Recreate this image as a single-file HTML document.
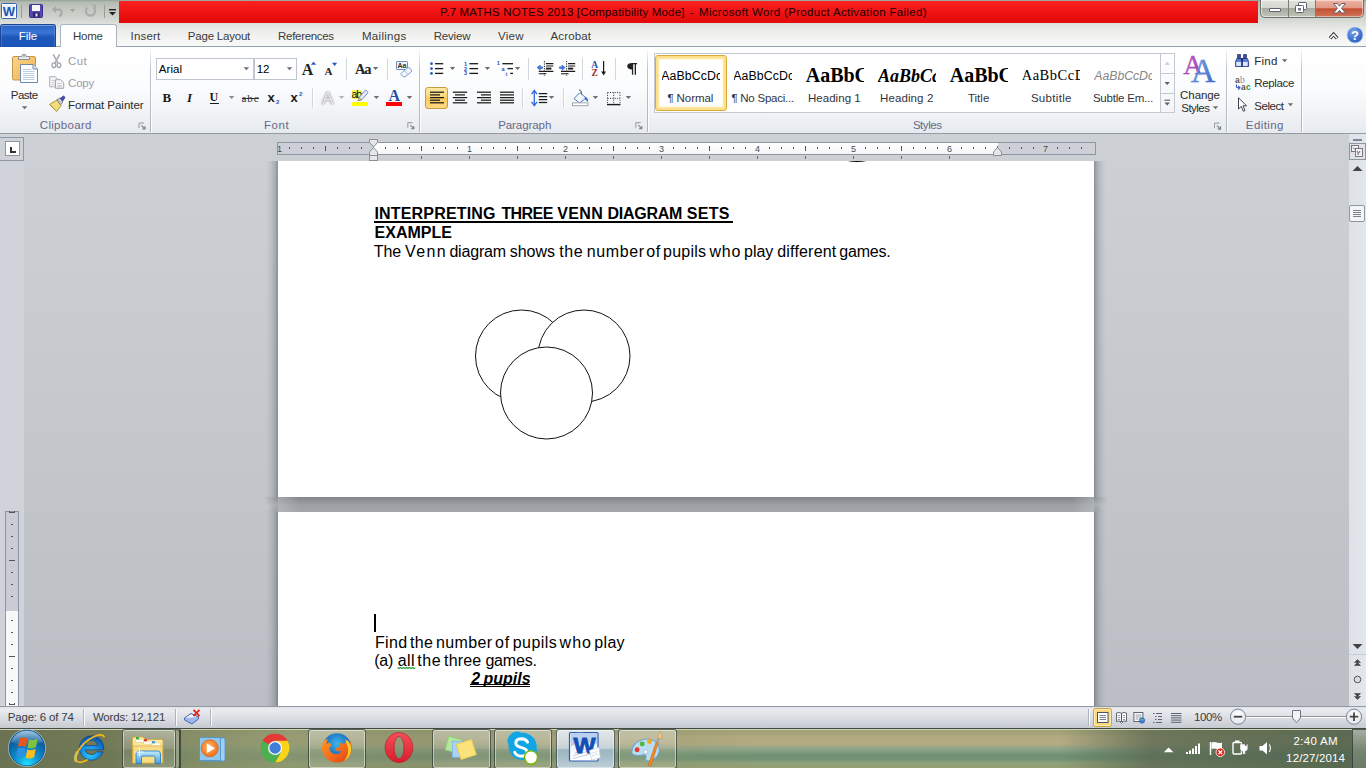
<!DOCTYPE html>
<html>
<head>
<meta charset="utf-8">
<title>P.7 MATHS NOTES 2013 - Microsoft Word</title>
<style>
*{box-sizing:border-box;margin:0;padding:0}
html,body{width:1366px;height:768px;overflow:hidden;background:#c9cdd2;font-family:"Liberation Sans",sans-serif;}
#root{position:absolute;left:0;top:0;width:1366px;height:768px;overflow:hidden;}
.abs{position:absolute}
.t{position:absolute;white-space:nowrap;font-size:12px;color:#3a3a3a;line-height:14px}
svg{position:absolute;overflow:visible}
/* title bar */
#title{left:0;top:0;width:1366px;height:47px;background:linear-gradient(180deg,#8fa097 0px,#b4bab2 2px,#c2c6bf 8px,#ccd0c9 16px,#dcdfda 23px,#ecedea 31px,#f5f6f4 40px,#f8f8f7 46px);}
#redbar{left:119px;top:1px;width:1139px;height:22px;background:linear-gradient(180deg,#fb2222 0,#f01414 10px,#e30a0a 21px);}
#tabline{left:0;top:46px;width:1366px;height:1px;background:#93a2b5}
#ribbon{left:0;top:47px;width:1366px;height:86px;background:linear-gradient(180deg,#ffffff 0,#fbfcfd 40px,#f0f2f5 68px,#e6e9ee 86px);}
#ribbot{left:0;top:133px;width:1366px;height:2px;background:linear-gradient(180deg,#8c929b,#b4b9c0)}
#docbg{left:0;top:134px;width:1366px;height:572px;background:linear-gradient(180deg,#cdd1d6 0,#c9cdd2 150px,#c2c6cb 350px,#bbbfc5 572px);}
.page{background:#fff}
.dt{font-size:16px;line-height:18px;color:#000;white-space:nowrap}
#status{left:0;top:706px;width:1366px;height:22px;background:linear-gradient(180deg,#dfe2e7 0,#e9ebef 3px,#d9dce2 12px,#c6cad1 21px);border-top:1px solid #9199a5}
#taskbar{left:0;top:728px;width:1366px;height:40px;background:linear-gradient(180deg,#3f4a42 0,#3f4a42 1px,#c6c6a4 1px,#c6c6a4 2px,#a2a275 2px,#a5a378 5px,#b2aa80 9px,#b3ab82 16px,#8fa58a 21px,#6f9274 27px,#729274 31px,#8fa078 35px,#959f72 40px);}
</style>
</head>
<body>
<div id="root">
<!--TITLE-->
<div id="title" class="abs"></div>
<div id="redbar" class="abs"></div>
<div class="t" style="left:439.90px;top:5px;font-size:11.5px;line-height:14px;color:#200000;letter-spacing:0.181px;">P.7 MATHS NOTES 2013 [Compatibility Mode]</div>
<div class="t" style="left:689.70px;top:5px;font-size:11.5px;line-height:14px;color:#200000;">-</div>
<div class="t" style="left:699.00px;top:5px;font-size:11.5px;line-height:14px;color:#200000;letter-spacing:0.316px;">Microsoft Word (Product Activation Failed)</div>
<!-- QAT -->
<svg style="left:0;top:0" width="120" height="24" viewBox="0 0 120 24">
<!-- word icon -->
<rect x="1.5" y="3.5" width="15" height="15" rx="1" fill="#fdfdfe" stroke="#3a62a8"/>
<rect x="3" y="5" width="12" height="12" fill="#e8eef8"/>
<text x="9" y="16" font-family="Liberation Sans" font-weight="bold" font-size="13" fill="#1d56b5" text-anchor="middle">W</text>
<rect x="21" y="5" width="1" height="13" fill="#9a9e9a"/>
<!-- save -->
<rect x="29.5" y="4.5" width="13" height="13" rx="1" fill="#5546b8" stroke="#3b2f8e"/>
<rect x="32" y="5" width="8" height="6" fill="#f4f6fb"/>
<rect x="33" y="12.5" width="6.5" height="4.5" fill="#2c2760"/>
<rect x="35.5" y="13.5" width="2" height="3" fill="#e8e8f0"/>
<!-- undo -->
<path d="M53.5 9.5 h5.5 a3 3 0 0 1 2.6 4.2 l-2.2 3" fill="none" stroke="#a4a8a6" stroke-width="2"/>
<path d="M52 9.5 l4 -3.5 v7 Z" fill="#a4a8a6"/>
<path d="M70 9 h5 l-2.5 3 Z" fill="#9a9e9c"/>
<!-- redo -->
<path d="M93.5 7.5 a4.6 4.6 0 1 1 -6 0" fill="none" stroke="#a9adab" stroke-width="2.2"/>
<path d="M91.5 4.5 h4.5 v4.5 Z" fill="#a9adab"/>
<rect x="104" y="5" width="1" height="13" fill="#9a9e9a"/>
<rect x="109" y="9" width="7" height="1.4" fill="#222"/>
<path d="M109 12 h7 l-3.5 3.5 Z" fill="#222"/>
</svg>
<!-- window controls -->
<div class="abs" style="left:1260px;top:0;width:104px;height:18px;border:1px solid #6f726c;border-top:none;border-radius:0 0 5px 5px;background:linear-gradient(180deg,#dfe1da 0,#d6d8d0 45%,#a7aa9e 50%,#c2c4b9 100%);box-shadow:inset 0 0 0 1px rgba(255,255,255,.55)"></div>
<div class="abs" style="left:1315px;top:0;width:48px;height:17px;border-radius:0 0 4px 0;background:linear-gradient(180deg,#edb3a4 0,#e29a88 45%,#c24f32 52%,#d1765a 100%);box-shadow:inset 0 0 0 1px rgba(255,255,255,.45)"></div>
<div class="abs" style="left:1288px;top:0;width:1px;height:17px;background:#7b7e77"></div>
<div class="abs" style="left:1315px;top:0;width:1px;height:17px;background:#7b7e77"></div>
<svg style="left:1260px;top:0" width="104" height="18" viewBox="1260 0 104 18">
<rect x="1269.5" y="8.5" width="11" height="3" rx=".5" fill="#fff" stroke="#5c6270"/>
<rect x="1298.5" y="2.5" width="8" height="7" rx=".8" fill="#fff" stroke="#5c6270"/>
<rect x="1295.5" y="5.5" width="8" height="7" rx=".8" fill="#fff" stroke="#5c6270"/>
<rect x="1298" y="8" width="3" height="2.5" fill="#767b88"/>
<path d="M1333.500 3.500 h3.800 l2.200 2.700 l2.200 -2.700 h3.800 l-4 4.700 l4 4.800 h-3.800 l-2.200 -2.700 l-2.200 2.700 h-3.800 l4 -4.800 Z" fill="#fff" stroke="#5c5668" stroke-width=".9"/>
</svg>
<!--TITLE-END-->
<!--TABS-->
<div id="tabline" class="abs"></div>
<div class="abs" style="left:0;top:24px;width:56px;height:23px;border-radius:3px 3px 0 0;border:1px solid #1b469a;border-bottom:none;background:linear-gradient(180deg,#2a63c4 0,#3a75d4 35%,#1c56b8 55%,#1a56b9 100%);box-shadow:inset 0 1px 0 rgba(255,255,255,.35),inset 1px 0 0 rgba(255,255,255,.15),inset -1px 0 0 rgba(255,255,255,.15)"></div>
<div class="abs" style="left:60px;top:24px;width:57px;height:24px;border-radius:3px 3px 0 0;border:1px solid #a9b4c3;border-bottom:none;background:#fff"></div>
<div class="t" style="left:18.70px;top:29px;font-size:11.5px;line-height:14px;color:#fff;letter-spacing:0.017px;">File</div>
<div class="t" style="left:73.00px;top:29px;font-size:11.5px;line-height:14px;color:#3a3a3a;letter-spacing:-0.267px;">Home</div>
<div class="t" style="left:130.50px;top:29px;font-size:11.5px;line-height:14px;color:#3a3a3a;letter-spacing:0.210px;">Insert</div>
<div class="t" style="left:187.80px;top:29px;font-size:11.5px;line-height:14px;color:#3a3a3a;letter-spacing:-0.210px;">Page Layout</div>
<div class="t" style="left:278.10px;top:29px;font-size:11.5px;line-height:14px;color:#3a3a3a;letter-spacing:-0.311px;">References</div>
<div class="t" style="left:362.00px;top:29px;font-size:11.5px;line-height:14px;color:#3a3a3a;letter-spacing:0.286px;">Mailings</div>
<div class="t" style="left:433.70px;top:29px;font-size:11.5px;line-height:14px;color:#3a3a3a;letter-spacing:-0.190px;">Review</div>
<div class="t" style="left:497.90px;top:29px;font-size:11.5px;line-height:14px;color:#3a3a3a;letter-spacing:0.283px;">View</div>
<div class="t" style="left:550.60px;top:29px;font-size:11.5px;line-height:14px;color:#3a3a3a;letter-spacing:0.108px;">Acrobat</div>
<svg style="left:1320px;top:24px" width="46" height="23" viewBox="1320 24 46 23">
<path d="M1330 38.300 l3.600 -4 l3.600 4" fill="none" stroke="#333" stroke-width="3.400" stroke-linejoin="miter"/>
<path d="M1330.200 38.200 l3.400 -3.800 l3.400 3.800" fill="none" stroke="#fff" stroke-width="1.500"/>
<defs><radialGradient id="hg" cx=".4" cy=".3" r=".8"><stop offset="0" stop-color="#7fa6e8"/><stop offset=".6" stop-color="#3f74d0"/><stop offset="1" stop-color="#2c5cb4"/></radialGradient></defs>
<circle cx="1355" cy="35" r="8" fill="url(#hg)" stroke="#b9cdf0" stroke-width=".8"/>
<text x="1355" y="40" font-family="Liberation Sans" font-weight="bold" font-size="13" fill="#fff" text-anchor="middle">?</text>
</svg>
<!--TABS-END-->
<!--RIBBON-->
<div id="ribbon" class="abs"></div>
<div id="ribbot" class="abs"></div>
<div class="abs" style="left:150px;top:50px;width:1px;height:82px;background:linear-gradient(180deg,rgba(176,184,196,.15),#bcc3ce 25%,#b3bac6 80%,#aeb5c1)"></div>
<div class="abs" style="left:151px;top:50px;width:1px;height:82px;background:rgba(255,255,255,.9)"></div>
<div class="abs" style="left:419px;top:50px;width:1px;height:82px;background:linear-gradient(180deg,rgba(176,184,196,.15),#bcc3ce 25%,#b3bac6 80%,#aeb5c1)"></div>
<div class="abs" style="left:420px;top:50px;width:1px;height:82px;background:rgba(255,255,255,.9)"></div>
<div class="abs" style="left:647px;top:50px;width:1px;height:82px;background:linear-gradient(180deg,rgba(176,184,196,.15),#bcc3ce 25%,#b3bac6 80%,#aeb5c1)"></div>
<div class="abs" style="left:648px;top:50px;width:1px;height:82px;background:rgba(255,255,255,.9)"></div>
<div class="abs" style="left:1226px;top:50px;width:1px;height:82px;background:linear-gradient(180deg,rgba(176,184,196,.15),#bcc3ce 25%,#b3bac6 80%,#aeb5c1)"></div>
<div class="abs" style="left:1227px;top:50px;width:1px;height:82px;background:rgba(255,255,255,.9)"></div>
<div class="abs" style="left:1301px;top:50px;width:1px;height:82px;background:linear-gradient(180deg,rgba(176,184,196,.15),#bcc3ce 25%,#b3bac6 80%,#aeb5c1)"></div>
<div class="abs" style="left:1302px;top:50px;width:1px;height:82px;background:rgba(255,255,255,.9)"></div>
<div class="t" style="left:39.80px;top:118px;font-size:11.5px;line-height:14px;color:#66698a;letter-spacing:0.300px;">Clipboard</div>
<div class="t" style="left:264.00px;top:118px;font-size:11.5px;line-height:14px;color:#66698a;letter-spacing:0.533px;">Font</div>
<div class="t" style="left:498.20px;top:118px;font-size:11.5px;line-height:14px;color:#66698a;letter-spacing:-0.075px;">Paragraph</div>
<div class="t" style="left:912.90px;top:118px;font-size:11.5px;line-height:14px;color:#66698a;letter-spacing:-0.460px;">Styles</div>
<div class="t" style="left:1245.80px;top:118px;font-size:11.5px;line-height:14px;color:#66698a;letter-spacing:0.425px;">Editing</div>
<div class="t" style="left:10.80px;top:88px;font-size:11.5px;line-height:14px;color:#2b2b2b;letter-spacing:-0.525px;">Paste</div>
<div class="t" style="left:68.00px;top:54px;font-size:11.5px;line-height:14px;color:#9a9cab;letter-spacing:0.400px;">Cut</div>
<div class="t" style="left:68.00px;top:76px;font-size:11.5px;line-height:14px;color:#9a9cab;letter-spacing:-0.167px;">Copy</div>
<div class="t" style="left:68.00px;top:98px;font-size:11.5px;line-height:14px;color:#2b2b2b;letter-spacing:-0.035px;">Format Painter</div>
<div class="abs" style="left:156px;top:58px;width:98px;height:22px;border:1px solid #bfc6d0;background:#fff"></div>
<div class="abs" style="left:254px;top:58px;width:43px;height:22px;border:1px solid #bfc6d0;background:#fff"></div>
<div class="t" style="left:158.70px;top:62px;font-size:11.5px;line-height:14px;color:#000;letter-spacing:0.100px;">Arial</div>
<div class="t" style="left:256.70px;top:62px;font-size:11.5px;line-height:14px;color:#000;letter-spacing:-0.200px;">12</div>
<div class="t" style="left:162.40px;top:90px;font-size:13px;line-height:16px;color:#1a1a1a;font-family:'Liberation Serif',serif;font-weight:bold;">B</div>
<div class="t" style="left:187.05px;top:90px;font-size:13px;line-height:16px;color:#1a1a1a;font-family:'Liberation Serif',serif;font-weight:bold;font-style:italic;">I</div>
<div class="t" style="left:209.40px;top:90px;font-size:12px;line-height:14px;color:#1a1a1a;font-family:'Liberation Serif',serif;font-weight:bold;">U</div>
<div class="abs" style="left:210px;top:103px;width:9px;height:1px;background:#1a1a1a"></div>
<div class="t" style="left:241.40px;top:92px;font-size:11px;line-height:13px;color:#333;font-family:'Liberation Serif',serif;letter-spacing:0.975px;">abc</div>
<div class="abs" style="left:241.5px;top:98px;width:17px;height:1px;background:#333"></div>
<div class="t" style="left:267.40px;top:90px;font-size:13px;line-height:16px;color:#1a1a1a;font-weight:bold;">x</div>
<div class="t" style="left:275.90px;top:99px;font-size:6px;line-height:7px;color:#2a55c8;font-weight:bold;">2</div>
<div class="t" style="left:290.40px;top:90px;font-size:13px;line-height:16px;color:#1a1a1a;font-weight:bold;">x</div>
<div class="t" style="left:298.90px;top:91px;font-size:6px;line-height:7px;color:#2a55c8;font-weight:bold;">2</div>
<div class="t" style="left:301.70px;top:60px;font-size:16px;line-height:19px;color:#222;font-family:'Liberation Serif',serif;font-weight:bold;">A</div>
<div class="t" style="left:324.60px;top:65px;font-size:11px;line-height:13px;color:#222;font-family:'Liberation Serif',serif;font-weight:bold;">A</div>
<div class="t" style="left:355.00px;top:61px;font-size:14.5px;line-height:17px;color:#222;font-family:'Liberation Serif',serif;font-weight:bold;letter-spacing:-1.100px;">Aa</div>
<div class="t" style="left:321.90px;top:89px;font-size:17px;line-height:20px;color:#e9e9ec;text-shadow:0 0 2px #9a9aa2,0 0 1px #a8a8b0,0 0 3px #c4c4ca;">A</div>
<div class="t" style="left:388.40px;top:86px;font-size:16px;line-height:19px;color:#1f4ea8;font-family:'Liberation Serif',serif;font-weight:bold;">A</div>
<div class="abs" style="left:386px;top:102px;width:16px;height:4px;background:#f00"></div>
<div class="abs" style="left:352px;top:102px;width:16px;height:4px;background:#ffff00"></div>
<div class="abs" style="left:352px;top:90px;width:10px;height:9px;background:#f7f35a"></div>
<div class="t" style="left:351.60px;top:88px;font-size:10.5px;line-height:13px;color:#111;letter-spacing:-1.300px;">ab</div>
<svg style="left:0;top:47px" width="1366" height="87" viewBox="0 47 1366 87">
<defs><linearGradient id="gcb" x1="0" y1="0" x2="1" y2="1"><stop offset="0" stop-color="#f9d585"/><stop offset="1" stop-color="#eeb457"/></linearGradient><linearGradient id="gsel" x1="0" y1="0" x2="0" y2="1"><stop offset="0" stop-color="#fde9a6"/><stop offset=".45" stop-color="#fcd674"/><stop offset=".5" stop-color="#fbc957"/><stop offset="1" stop-color="#fcdb85"/></linearGradient><linearGradient id="gblu" x1="0" y1="0" x2="1" y2="1"><stop offset="0" stop-color="#8fb4ee"/><stop offset="1" stop-color="#2d63c8"/></linearGradient><linearGradient id="gpur" x1="0" y1="0" x2="1" y2="1"><stop offset="0" stop-color="#d36ad8"/><stop offset="1" stop-color="#8d3aa8"/></linearGradient></defs>
<rect x="12.5" y="56.5" width="23" height="23.5" rx="1.5" fill="url(#gcb)" stroke="#c8964a"/>
<path d="M18.5 59.5 v-2 q0 -1 1 -1 h2 q.5 -2.2 2.5 -2.2 q2 0 2.5 2.2 h2 q1 0 1 1 v2 Z" fill="#e9ebee" stroke="#7f8792" stroke-width=".9"/>
<circle cx="24" cy="56.2" r="1" fill="#fff" stroke="#7f8792" stroke-width=".6"/>
<path d="M20.5 64.5 h12.5 l4.5 4.5 v13.5 h-17 Z" fill="#fdfeff" stroke="#6f87aa" stroke-width="1"/>
<path d="M33 64.5 v4.5 h4.5" fill="#dfe7f2" stroke="#6f87aa" stroke-width=".9"/>
<path d="M23 69.5h8 M23 71.5h11.5 M23 73.5h11.5 M23 75.5h11.5 M23 77.5h11.5 M23 79.5h11.5" stroke="#b9c7dc" stroke-width=".9"/>
<path d="M21.90 106.20 h5.4 l-2.70 3 Z" fill="#6a6a6a"/>
<path d="M53.2 54.3 l4.6 8.6 M59.6 54.3 l-4.6 8.6" stroke="#a9abb3" stroke-width="1.5" fill="none"/>
<ellipse cx="53.9" cy="65.2" rx="1.9" ry="2.3" fill="none" stroke="#a4a6ae" stroke-width="1.3"/>
<ellipse cx="58.9" cy="65.2" rx="1.9" ry="2.3" fill="none" stroke="#a4a6ae" stroke-width="1.3"/>
<path d="M49.7 76.7 h5.5 l2.8 2.8 v7.3 h-8.3 Z" fill="#f4f4f6" stroke="#acaeb6" stroke-width="1"/>
<path d="M51.5 80.5h4.5 M51.5 82.5h4.5 M51.5 84.5h4.5" stroke="#c5c7cd" stroke-width=".8"/>
<path d="M55.5 79.7 h5.2 l3 3 v5.6 h-8.2 Z" fill="#f6f6f8" stroke="#a4a6ae" stroke-width="1"/>
<path d="M57.3 83.5h4.5 M57.3 85.5h4.5 M57.3 86.9h4.5" stroke="#c0c2c8" stroke-width=".8"/>
<path d="M49.5 104.5 l7.5 -4.5 l4 5.5 l-4.5 6 Z" fill="#f2df7c" stroke="#a88d2c" stroke-width=".9"/>
<path d="M51 104.8 l6 7 " stroke="#c9ac44" stroke-width=".7"/>
<path d="M56.8 99.8 l3.2 -1.8 l2.8 4 l-2.2 2.8 Z" fill="#c9ccd2" stroke="#6c717c" stroke-width=".8"/>
<path d="M60.3 98.3 l3.2 -2.2 l1.5 1.2 l-2.2 3.6 Z" fill="#4a4fb4" stroke="#2f3386" stroke-width=".8"/>
<path d="M139.0 128.0 v-5 h5" fill="none" stroke="#9297a3" stroke-width="1"/><path d="M141.5 125.5 l3 3 M145.0 126.2 v2.8 h-2.8" fill="none" stroke="#7d828e" stroke-width="1.1"/>
<path d="M243.70 67.20 h5.4 l-2.70 3.0 Z" fill="#6e6e6e"/>
<path d="M286.80 67.20 h5.4 l-2.70 3.0 Z" fill="#6e6e6e"/>
<path d="M228.90 96.10 h5.4 l-2.70 3.0 Z" fill="#8a8a8a"/>
<path d="M310.8 64.8 l2.7 -3 l2.7 3 Z" fill="#2b56c0"/>
<path d="M332 62.8 h5.2 l-2.6 3.1 Z" fill="#2b56c0"/>
<path d="M372.90 67.10 h5.4 l-2.70 3.0 Z" fill="#6e6e6e"/>
<path d="M346.5 58 V80" stroke="#d2d6dd" stroke-width="1"/><path d="M347.5 58 V80" stroke="#fff" stroke-width="1"/>
<path d="M387.5 58 V80" stroke="#d2d6dd" stroke-width="1"/><path d="M388.5 58 V80" stroke="#fff" stroke-width="1"/>
<path d="M312.5 88 V108" stroke="#d2d6dd" stroke-width="1"/><path d="M313.5 88 V108" stroke="#fff" stroke-width="1"/>
<rect x="396.5" y="61.5" width="11" height="8" rx=".6" fill="#f2f6fc" stroke="#6d8cc0" stroke-width="1"/>
<text x="402" y="68.3" font-family="Liberation Sans" font-size="7" font-weight="bold" fill="#333" text-anchor="middle">Aa</text>
<path d="M401.5 73 l5.8 -5 q1.6 -1 2.8 .3 l1.2 1.6 q.8 1.3 -.5 2.4 l-5.6 4.4 q-1.4 .7 -2.4 -.4 l-1.6 -1.6 q-.6 -1 .3 -1.7 Z" fill="#f3f6fb" stroke="#7f9bd0" stroke-width="1"/>
<path d="M404.5 70.8 l3.6 4" stroke="#9db3dc" stroke-width=".8"/>
<path d="M338.90 96.10 h5.4 l-2.70 3.0 Z" fill="#b5b5b9"/>
<path d="M373.70 96.10 h5.4 l-2.70 3.0 Z" fill="#6e6e6e"/>
<path d="M406.80 96.10 h5.4 l-2.70 3.0 Z" fill="#6e6e6e"/>
<path d="M359.2 97.4 l5.4 -6.6 q1 -.9 2 -.1 l.9 .8 q.7 .9 0 1.8 l-5.6 6.3 l-3.2 .6 Z" fill="#dfe9f8" stroke="#5f83c4" stroke-width=".9"/>
<path d="M359 97.6 l2.8 2.2 l-4 1.2 Z" fill="#d9c690" stroke="#8a7a48" stroke-width=".6"/>
<path d="M407.8 127.7 v-5 h5" fill="none" stroke="#9297a3" stroke-width="1"/><path d="M410.3 125.2 l3 3 M413.8 125.9 v2.8 h-2.8" fill="none" stroke="#7d828e" stroke-width="1.1"/>
</svg>
<svg style="left:0;top:47px" width="1366" height="87" viewBox="0 47 1366 87">
<circle cx="431.5" cy="63.7" r="1.35" fill="#2a55c0"/>
<path d="M435 63.7 H443.2" stroke="#1a1a1a" stroke-width="1.3"/>
<circle cx="431.5" cy="68.6" r="1.35" fill="#2a55c0"/>
<path d="M435 68.6 H443.2" stroke="#1a1a1a" stroke-width="1.3"/>
<circle cx="431.5" cy="73.4" r="1.35" fill="#2a55c0"/>
<path d="M435 73.4 H443.2" stroke="#1a1a1a" stroke-width="1.3"/>
<path d="M449.80 67.10 h5.4 l-2.70 3.0 Z" fill="#6e6e6e"/>
<text x="465.6" y="65.60000000000001" font-family="Liberation Sans" font-weight="bold" font-size="5.6" fill="#2a55c0" text-anchor="middle">1</text>
<path d="M469.4 63.7 H478.1" stroke="#1a1a1a" stroke-width="1.3"/>
<text x="465.6" y="70.5" font-family="Liberation Sans" font-weight="bold" font-size="5.6" fill="#2a55c0" text-anchor="middle">2</text>
<path d="M469.4 68.6 H478.1" stroke="#1a1a1a" stroke-width="1.3"/>
<text x="465.6" y="75.30000000000001" font-family="Liberation Sans" font-weight="bold" font-size="5.6" fill="#2a55c0" text-anchor="middle">3</text>
<path d="M469.4 73.4 H478.1" stroke="#1a1a1a" stroke-width="1.3"/>
<path d="M484.70 67.10 h5.4 l-2.70 3.0 Z" fill="#6e6e6e"/>
<text x="498.4" y="65.4" font-family="Liberation Sans" font-weight="bold" font-size="5.6" fill="#2a55c0" text-anchor="middle">1</text>
<path d="M502.3 63.7 H513" stroke="#1a1a1a" stroke-width="1.3"/>
<text x="503" y="70.6" font-family="Liberation Sans" font-weight="bold" font-size="5.6" fill="#2a55c0" text-anchor="middle">a</text>
<path d="M507.5 68.6 H513" stroke="#1a1a1a" stroke-width="1.3"/>
<text x="506.6" y="76.2" font-family="Liberation Sans" font-weight="bold" font-size="5.6" fill="#2a55c0" text-anchor="middle">i</text>
<path d="M510.2 73.4 H513" stroke="#1a1a1a" stroke-width="1.3"/>
<path d="M514.90 67.10 h5.4 l-2.70 3.0 Z" fill="#6e6e6e"/>
<path d="M528.5 58 V80" stroke="#d2d6dd" stroke-width="1"/><path d="M529.5 58 V80" stroke="#fff" stroke-width="1"/>
<path d="M582.5 58 V80" stroke="#d2d6dd" stroke-width="1"/><path d="M583.5 58 V80" stroke="#fff" stroke-width="1"/>
<path d="M615.5 58 V80" stroke="#d2d6dd" stroke-width="1"/><path d="M616.5 58 V80" stroke="#fff" stroke-width="1"/>
<path d="M522.5 88 V108" stroke="#d2d6dd" stroke-width="1"/><path d="M523.5 88 V108" stroke="#fff" stroke-width="1"/>
<path d="M563.5 88 V108" stroke="#d2d6dd" stroke-width="1"/><path d="M564.5 88 V108" stroke="#fff" stroke-width="1"/>
<path d="M544.4 61 V76" stroke="#1a1a1a" stroke-width="1" stroke-dasharray="1.2 1.2"/><path d="M545.9 63.6 H553.4 M545.9 66 H553.4" stroke="#1a1a1a" stroke-width="1.1"/><path d="M545.9 68.6 H551.4" stroke="#1a1a1a" stroke-width="1.9"/><path d="M538.8 71.4 H553.4 M538.8 73.8 H546.4" stroke="#1a1a1a" stroke-width="1.1"/><path d="M537 67.6 l3.2 -2.6 v1.8 h2.4 v1.6 h-2.4 v1.8 Z" fill="#3f7be0" stroke="#2a55c0" stroke-width=".5"/>
<path d="M566.6 61 V76" stroke="#1a1a1a" stroke-width="1" stroke-dasharray="1.2 1.2"/><path d="M568.1 63.6 H575.2 M568.1 66 H575.2" stroke="#1a1a1a" stroke-width="1.1"/><path d="M568.1 68.6 H573.2" stroke="#1a1a1a" stroke-width="1.9"/><path d="M561 71.4 H575.2 M561 73.8 H568.6" stroke="#1a1a1a" stroke-width="1.1"/><path d="M565.2 67.6 l-3.2 -2.6 v1.8 h-2.6 v1.6 h2.6 v1.8 Z" fill="#3f7be0" stroke="#2a55c0" stroke-width=".5"/>
<text x="594.6" y="67.6" font-family="Liberation Serif" font-weight="bold" font-size="9.5" fill="#2a50b0" text-anchor="middle">A</text>
<text x="594.6" y="75.5" font-family="Liberation Serif" font-weight="bold" font-size="9.5" fill="#9a3030" text-anchor="middle">Z</text>
<path d="M603.6 61 V74" stroke="#1a1a1a" stroke-width="1.2"/><path d="M601.2 71.5 h4.8 l-2.4 4 Z" fill="#1a1a1a"/>
<rect x="425.5" y="87.5" width="22" height="21" rx="2.5" fill="url(#gsel)" stroke="#c99a3c"/>
<path d="M430 92.2 H444" stroke="#1a1a1a" stroke-width="1.25"/><path d="M430 94.9 H440" stroke="#1a1a1a" stroke-width="1.25"/><path d="M430 97.6 H444" stroke="#1a1a1a" stroke-width="1.25"/><path d="M430 100.2 H440" stroke="#1a1a1a" stroke-width="1.25"/><path d="M430 102.8 H444" stroke="#1a1a1a" stroke-width="1.25"/>
<path d="M452.8 92.2 H467.2" stroke="#1a1a1a" stroke-width="1.25"/><path d="M455 94.9 H465" stroke="#1a1a1a" stroke-width="1.25"/><path d="M452.8 97.6 H467.2" stroke="#1a1a1a" stroke-width="1.25"/><path d="M455 100.2 H465" stroke="#1a1a1a" stroke-width="1.25"/><path d="M452.8 102.8 H467.2" stroke="#1a1a1a" stroke-width="1.25"/>
<path d="M477 92.2 H491" stroke="#1a1a1a" stroke-width="1.25"/><path d="M481 94.9 H491" stroke="#1a1a1a" stroke-width="1.25"/><path d="M477 97.6 H491" stroke="#1a1a1a" stroke-width="1.25"/><path d="M481 100.2 H491" stroke="#1a1a1a" stroke-width="1.25"/><path d="M477 102.8 H491" stroke="#1a1a1a" stroke-width="1.25"/>
<path d="M500 92.2 H514" stroke="#1a1a1a" stroke-width="1.25"/><path d="M500 94.9 H514" stroke="#1a1a1a" stroke-width="1.25"/><path d="M500 97.6 H514" stroke="#1a1a1a" stroke-width="1.25"/><path d="M500 100.2 H514" stroke="#1a1a1a" stroke-width="1.25"/><path d="M500 102.8 H514" stroke="#1a1a1a" stroke-width="1.25"/>
<path d="M534.3 91 V105" stroke="#2f66d8" stroke-width="1.3"/><path d="M531.6 94.2 l2.7 -3.8 l2.7 3.8 M531.6 101.8 l2.7 3.8 l2.7 -3.8" fill="none" stroke="#2f66d8" stroke-width="1.3"/>
<path d="M538.8 93.6 H547.2" stroke="#1a1a1a" stroke-width="1.25"/>
<path d="M538.8 96.6 H547.2" stroke="#1a1a1a" stroke-width="1.25"/>
<path d="M538.8 99.6 H547.2" stroke="#1a1a1a" stroke-width="1.25"/>
<path d="M538.8 102.5 H547.2" stroke="#1a1a1a" stroke-width="1.25"/>
<path d="M548.80 96.10 h5.4 l-2.70 3.0 Z" fill="#6e6e6e"/>
<path d="M574 98.5 l6 -6 l6 5.5 l-6.5 5 Z" fill="#f4f7fc" stroke="#4f74b8" stroke-width="1"/>
<path d="M579 90.2 q1.2 -.8 2 .6 l.8 4" fill="none" stroke="#56606e" stroke-width="1"/>
<path d="M585.5 97 q2.4 1 2.4 4.4 q-1.6 -.4 -2.8 -2.6 Z" fill="#3b78e0" stroke="#2a55c0" stroke-width=".5"/>
<rect x="572.5" y="102.9" width="15.5" height="2.8" fill="#fff" stroke="#9a9da4" stroke-width=".9"/>
<path d="M592.70 96.10 h5.4 l-2.70 3.0 Z" fill="#6e6e6e"/>
<path d="M607.5 92.5 H620 M607.5 98.4 H620 M607.5 92.5 V104 M613.7 92.5 V104 M620 92.5 V104" fill="none" stroke="#444" stroke-width="1" stroke-dasharray="1.1 1.3"/>
<path d="M607 104.6 H620.4" stroke="#1a1a1a" stroke-width="1.4"/>
<path d="M625.70 96.10 h5.4 l-2.70 3.0 Z" fill="#6e6e6e"/>
<path d="M632.2 63 h4.9 v1.300 h-1.100 v10.500 h-1.300 v-10.500 h-1.500 v10.500 h-1.300 v-5.300 q-4.600 -.200 -4.700 -3.300 q.100 -3.100 5 -3.200 Z" fill="#222"/>
<path d="M635.8 127.7 v-5 h5" fill="none" stroke="#9297a3" stroke-width="1"/><path d="M638.3 125.2 l3 3 M641.8 125.9 v2.8 h-2.8" fill="none" stroke="#7d828e" stroke-width="1.1"/>
</svg>
<div class="abs" style="left:654px;top:53px;width:521px;height:60px;border:1px solid #c3c9d2;background:#fff"></div>
<div class="abs" style="left:655px;top:55px;width:72px;height:56px;border:1px solid #d9a93f;border-radius:3px;background:#fff;box-shadow:inset 0 0 0 2.5px #fde08a,inset 0 0 0 3.5px #fff3c4"></div>
<div class="abs" style="left:662px;top:56px;width:58px;height:36px;overflow:hidden"><div class="t" style="left:-0.70px;top:13.00px;font-size:12.3px;line-height:15px;color:#000;letter-spacing:0.093px;">AaBbCcDc</div></div>
<div class="abs" style="left:734px;top:56px;width:58px;height:36px;overflow:hidden"><div class="t" style="left:-0.70px;top:13.00px;font-size:12.3px;line-height:15px;color:#000;letter-spacing:0.093px;">AaBbCcDc</div></div>
<div class="abs" style="left:806px;top:56px;width:58px;height:36px;overflow:hidden"><div class="t" style="left:-0.30px;top:7.00px;font-size:20px;line-height:24px;color:#000;font-family:'Liberation Serif',serif;font-weight:bold;">AaBbCc</div></div>
<div class="abs" style="left:878px;top:56px;width:58px;height:36px;overflow:hidden"><div class="t" style="left:-0.05px;top:9.00px;font-size:18px;line-height:22px;color:#000;font-family:'Liberation Serif',serif;font-weight:bold;font-style:italic;">AaBbCc</div></div>
<div class="abs" style="left:950px;top:56px;width:58px;height:36px;overflow:hidden"><div class="t" style="left:-0.30px;top:7.00px;font-size:20px;line-height:24px;color:#000;font-family:'Liberation Serif',serif;font-weight:bold;">AaBbCc</div></div>
<div class="abs" style="left:1022px;top:56px;width:58px;height:36px;overflow:hidden"><div class="t" style="left:-0.30px;top:11.00px;font-size:14.5px;line-height:17px;color:#000;font-family:'Liberation Serif',serif;letter-spacing:0.500px;">AaBbCcD</div></div>
<div class="abs" style="left:1094px;top:56px;width:58px;height:36px;overflow:hidden"><div class="t" style="left:0.35px;top:13.00px;font-size:12.3px;line-height:15px;color:#868686;font-style:italic;letter-spacing:-0.057px;">AaBbCcDc</div></div>
<div class="t" style="left:667.40px;top:91px;font-size:11.5px;line-height:14px;color:#33333a;letter-spacing:-0.079px;">¶ Normal</div>
<div class="t" style="left:731.40px;top:91px;font-size:11.5px;line-height:14px;color:#33333a;letter-spacing:-0.233px;">¶ No Spaci...</div>
<div class="t" style="left:808.00px;top:91px;font-size:11.5px;line-height:14px;color:#33333a;letter-spacing:0.031px;">Heading 1</div>
<div class="t" style="left:880.00px;top:91px;font-size:11.5px;line-height:14px;color:#33333a;letter-spacing:0.106px;">Heading 2</div>
<div class="t" style="left:967.90px;top:91px;font-size:11.5px;line-height:14px;color:#33333a;letter-spacing:0.025px;">Title</div>
<div class="t" style="left:1030.90px;top:91px;font-size:11.5px;line-height:14px;color:#33333a;letter-spacing:0.307px;">Subtitle</div>
<div class="t" style="left:1092.90px;top:91px;font-size:11.5px;line-height:14px;color:#33333a;letter-spacing:-0.205px;">Subtle Em...</div>
<div class="abs" style="left:1160px;top:53px;width:15px;height:60px;border:1px solid #c3c9d2;background:linear-gradient(180deg,#fff,#f3f5f8)"></div>
<div class="abs" style="left:1161px;top:73px;width:13px;height:1px;background:#c3c9d2"></div>
<div class="abs" style="left:1161px;top:93px;width:13px;height:1px;background:#c3c9d2"></div>
<div class="t" style="left:1180.10px;top:88px;font-size:11.5px;line-height:14px;color:#2b2b2b;letter-spacing:-0.080px;">Change</div>
<div class="t" style="left:1181.30px;top:101px;font-size:11.5px;line-height:14px;color:#2b2b2b;letter-spacing:-0.540px;">Styles</div>
<div class="t" style="left:1254.20px;top:54px;font-size:11.5px;line-height:14px;color:#2b2b2b;letter-spacing:0.250px;">Find</div>
<div class="t" style="left:1254.20px;top:76px;font-size:11.5px;line-height:14px;color:#2b2b2b;letter-spacing:-0.333px;">Replace</div>
<div class="t" style="left:1254.20px;top:99px;font-size:11.5px;line-height:14px;color:#2b2b2b;letter-spacing:-0.430px;">Select</div>
<svg style="left:0;top:47px" width="1366" height="87" viewBox="0 47 1366 87">
<path d="M1164.5 64.8 l2.7 -3 l2.7 3 Z" fill="#c9ccd3"/>
<path d="M1164.50 81.90 h5.4 l-2.70 3.0 Z" fill="#5e5e5e"/>
<path d="M1164.4 100.2 h5.6" stroke="#5e5e5e" stroke-width="1.1"/>
<path d="M1164.50 102.50 h5.4 l-2.70 3.0 Z" fill="#5e5e5e"/>
<text x="1193" y="73.8" font-family="Liberation Serif" font-size="27" fill="url(#gpur)" text-anchor="middle" stroke="#9b3fb4" stroke-width=".3">A</text>
<text x="1203" y="82" font-family="Liberation Serif" font-size="34" fill="url(#gblu)" text-anchor="middle" stroke="#3d6fd0" stroke-width=".3">A</text>
<path d="M1212.80 106.30 h5.4 l-2.70 3.0 Z" fill="#6e6e6e"/>
<path d="M1214.5 128.1 v-5 h5" fill="none" stroke="#9297a3" stroke-width="1"/><path d="M1217 125.6 l3 3 M1220.5 126.3 v2.8 h-2.8" fill="none" stroke="#7d828e" stroke-width="1.1"/>
<path d="M1237.5 54.5 h3 v4 h-3 Z M1243.5 54.5 h3 v4 h-3 Z" fill="#3a4fa0" stroke="#24306e" stroke-width=".7"/>
<path d="M1236.8 58.5 h4.6 l.8 3 v5 h-6.6 v-5 Z M1242.8 58.5 h4.6 l1.2 3 v5 h-6.6 v-5 Z" fill="#5a7fd4" stroke="#24306e" stroke-width=".8"/>
<rect x="1236.3" y="62" width="4.6" height="4" fill="#dbe6fa"/><rect x="1243" y="62" width="4.6" height="4" fill="#dbe6fa"/>
<rect x="1241" y="58" width="2" height="3.5" fill="#24306e"/>
<path d="M1281.90 59.20 h5.4 l-2.70 3.0 Z" fill="#6e6e6e"/>
<text x="1235" y="83" font-family="Liberation Sans" font-weight="bold" font-size="8.5" fill="#555">a</text>
<text x="1240" y="83" font-family="Liberation Serif" font-size="9.5" fill="#8a8a8a">b</text>
<text x="1241" y="90.2" font-family="Liberation Sans" font-weight="bold" font-size="8.5" fill="#555">a</text>
<text x="1246" y="90.2" font-family="Liberation Sans" font-weight="bold" font-size="8.5" fill="#1f9a2f">c</text>
<path d="M1236.5 84.5 v2 q0 1.3 1.3 1.3 h2 M1238.2 86 l1.8 1.8 l-1.8 1.8" fill="none" stroke="#3558b8" stroke-width="1.1"/>
<path d="M1238.5 97.8 v11.2 l2.8 -2.6 l2 4.8 l1.7 -.7 l-2 -4.7 h3.6 Z" fill="#fff" stroke="#3c4250" stroke-width="1"/>
<path d="M1287.80 103.20 h5.4 l-2.70 3.0 Z" fill="#6e6e6e"/>
</svg>
<!--RIBBON-END-->
<!--DOC-->
<div id="docbg" class="abs"></div>
<div class="abs" style="left:0;top:134px;width:24px;height:572px;background:#d0d4da"></div>
<!-- tab selector -->
<div class="abs" style="left:0;top:137px;width:24px;height:24px;border:1px solid #8d96a3;border-left:none;background:#cfd3d9"></div>
<div class="abs" style="left:5px;top:141px;width:15px;height:15px;border:1px solid #8d96a3;background:#fff"></div>
<div class="abs" style="left:10px;top:147px;width:2px;height:5px;background:#333"></div>
<div class="abs" style="left:10px;top:151px;width:6px;height:2px;background:#333"></div>
<!-- horizontal ruler -->
<div class="abs" style="left:277px;top:142px;width:819px;height:13px;border:1px solid #8d96a3;background:#cdd1d7"></div>
<div class="abs" style="left:374px;top:143px;width:624px;height:11px;background:linear-gradient(180deg,#ffffff,#f4f5f7)"></div>
<svg id="hruler" style="left:0;top:134px" width="1366" height="30"><rect x="289" y="13" width="1" height="2" fill="#555"/><rect x="301" y="13" width="1" height="2" fill="#555"/><rect x="313" y="13" width="1" height="2" fill="#555"/><rect x="325" y="12" width="1" height="5" fill="#555"/><rect x="337" y="13" width="1" height="2" fill="#555"/><rect x="349" y="13" width="1" height="2" fill="#555"/><rect x="361" y="13" width="1" height="2" fill="#555"/><rect x="385" y="13" width="1" height="2" fill="#555"/><rect x="397" y="13" width="1" height="2" fill="#555"/><rect x="409" y="13" width="1" height="2" fill="#555"/><rect x="421" y="12" width="1" height="5" fill="#555"/><rect x="433" y="13" width="1" height="2" fill="#555"/><rect x="445" y="13" width="1" height="2" fill="#555"/><rect x="457" y="13" width="1" height="2" fill="#555"/><rect x="481" y="13" width="1" height="2" fill="#555"/><rect x="493" y="13" width="1" height="2" fill="#555"/><rect x="505" y="13" width="1" height="2" fill="#555"/><rect x="517" y="12" width="1" height="5" fill="#555"/><rect x="529" y="13" width="1" height="2" fill="#555"/><rect x="541" y="13" width="1" height="2" fill="#555"/><rect x="553" y="13" width="1" height="2" fill="#555"/><rect x="577" y="13" width="1" height="2" fill="#555"/><rect x="589" y="13" width="1" height="2" fill="#555"/><rect x="601" y="13" width="1" height="2" fill="#555"/><rect x="613" y="12" width="1" height="5" fill="#555"/><rect x="625" y="13" width="1" height="2" fill="#555"/><rect x="637" y="13" width="1" height="2" fill="#555"/><rect x="649" y="13" width="1" height="2" fill="#555"/><rect x="673" y="13" width="1" height="2" fill="#555"/><rect x="685" y="13" width="1" height="2" fill="#555"/><rect x="697" y="13" width="1" height="2" fill="#555"/><rect x="709" y="12" width="1" height="5" fill="#555"/><rect x="721" y="13" width="1" height="2" fill="#555"/><rect x="733" y="13" width="1" height="2" fill="#555"/><rect x="745" y="13" width="1" height="2" fill="#555"/><rect x="769" y="13" width="1" height="2" fill="#555"/><rect x="781" y="13" width="1" height="2" fill="#555"/><rect x="793" y="13" width="1" height="2" fill="#555"/><rect x="805" y="12" width="1" height="5" fill="#555"/><rect x="817" y="13" width="1" height="2" fill="#555"/><rect x="829" y="13" width="1" height="2" fill="#555"/><rect x="841" y="13" width="1" height="2" fill="#555"/><rect x="865" y="13" width="1" height="2" fill="#555"/><rect x="877" y="13" width="1" height="2" fill="#555"/><rect x="889" y="13" width="1" height="2" fill="#555"/><rect x="901" y="12" width="1" height="5" fill="#555"/><rect x="913" y="13" width="1" height="2" fill="#555"/><rect x="925" y="13" width="1" height="2" fill="#555"/><rect x="937" y="13" width="1" height="2" fill="#555"/><rect x="961" y="13" width="1" height="2" fill="#555"/><rect x="973" y="13" width="1" height="2" fill="#555"/><rect x="985" y="13" width="1" height="2" fill="#555"/><rect x="997" y="12" width="1" height="5" fill="#555"/><rect x="1009" y="13" width="1" height="2" fill="#555"/><rect x="1021" y="13" width="1" height="2" fill="#555"/><rect x="1033" y="13" width="1" height="2" fill="#555"/><rect x="1057" y="13" width="1" height="2" fill="#555"/><rect x="1069" y="13" width="1" height="2" fill="#555"/><rect x="1081" y="13" width="1" height="2" fill="#555"/><text x="279.500" y="18" font-size="9" fill="#4a4a4a" text-anchor="middle" font-family="Liberation Sans">1</text><text x="469.5" y="18" font-size="9" fill="#4a4a4a" text-anchor="middle" font-family="Liberation Sans">1</text><text x="565.5" y="18" font-size="9" fill="#4a4a4a" text-anchor="middle" font-family="Liberation Sans">2</text><text x="661.5" y="18" font-size="9" fill="#4a4a4a" text-anchor="middle" font-family="Liberation Sans">3</text><text x="757.5" y="18" font-size="9" fill="#4a4a4a" text-anchor="middle" font-family="Liberation Sans">4</text><text x="853.5" y="18" font-size="9" fill="#4a4a4a" text-anchor="middle" font-family="Liberation Sans">5</text><text x="949.5" y="18" font-size="9" fill="#4a4a4a" text-anchor="middle" font-family="Liberation Sans">6</text><text x="1045.5" y="18" font-size="9" fill="#4a4a4a" text-anchor="middle" font-family="Liberation Sans">7</text><rect x="421" y="22" width="1" height="3" fill="#666"/><rect x="469" y="22" width="1" height="3" fill="#666"/><rect x="517" y="22" width="1" height="3" fill="#666"/><rect x="565" y="22" width="1" height="3" fill="#666"/><rect x="613" y="22" width="1" height="3" fill="#666"/><rect x="661" y="22" width="1" height="3" fill="#666"/><rect x="709" y="22" width="1" height="3" fill="#666"/><rect x="757" y="22" width="1" height="3" fill="#666"/><rect x="805" y="22" width="1" height="3" fill="#666"/><rect x="853" y="22" width="1" height="3" fill="#666"/><rect x="901" y="22" width="1" height="3" fill="#666"/><rect x="949" y="22" width="1" height="3" fill="#666"/><path d="M369.5 5.5 h8 v3 l-4 4.5 l-4 -4.5 Z" fill="#e4e6ea" stroke="#8a8f98"/><path d="M369.5 21.5 v-3.5 l4 -4.5 l4 4.5 v3.5 Z" fill="#e4e6ea" stroke="#8a8f98"/><rect x="369.5" y="21.5" width="8" height="5" fill="#e4e6ea" stroke="#8a8f98"/><path d="M993.5 21.5 v-3.5 l4 -4.5 l4 4.5 v3.5 Z" fill="#e4e6ea" stroke="#8a8f98"/></svg>
<!-- vertical ruler -->
<div class="abs" style="left:5px;top:511px;width:14px;height:196px;border:1px solid #8d96a3;border-bottom:none;background:#c9cdd3"></div>
<div class="abs" style="left:6px;top:611px;width:12px;height:95px;background:#f7f8f9"></div>
<svg id="vruler" style="left:0;top:500px" width="24" height="206"><rect x="11" y="24" width="2" height="1" fill="#555"/><rect x="11" y="36" width="2" height="1" fill="#555"/><rect x="11" y="48" width="2" height="1" fill="#555"/><rect x="9" y="60" width="6" height="1" fill="#555"/><rect x="11" y="72" width="2" height="1" fill="#555"/><rect x="11" y="84" width="2" height="1" fill="#555"/><rect x="11" y="96" width="2" height="1" fill="#555"/><rect x="11" y="120" width="2" height="1" fill="#555"/><rect x="11" y="132" width="2" height="1" fill="#555"/><rect x="11" y="144" width="2" height="1" fill="#555"/><rect x="9" y="156" width="6" height="1" fill="#555"/><rect x="11" y="168" width="2" height="1" fill="#555"/><rect x="11" y="180" width="2" height="1" fill="#555"/><rect x="11" y="192" width="2" height="1" fill="#555"/><rect x="9" y="12" width="6" height="1" fill="#555"/><rect x="9" y="11" width="1" height="2" fill="#555"/><rect x="14" y="11" width="1" height="1" fill="#555"/><rect x="9" y="204" width="6" height="1" fill="#555"/><rect x="9" y="203" width="1" height="2" fill="#555"/><rect x="14" y="203" width="1" height="1" fill="#555"/></svg>
<!-- page shadows -->
<div class="abs" style="left:266px;top:161px;width:12px;height:336px;background:linear-gradient(90deg,rgba(60,66,76,0) 0,rgba(60,66,76,.09) 40%,rgba(60,66,76,.24) 75%,rgba(60,66,76,.46) 100%)"></div>
<div class="abs" style="left:1094px;top:161px;width:12px;height:336px;background:linear-gradient(270deg,rgba(60,66,76,0) 0,rgba(60,66,76,.09) 40%,rgba(60,66,76,.24) 75%,rgba(60,66,76,.46) 100%)"></div>
<div class="abs" style="left:266px;top:512px;width:12px;height:194px;background:linear-gradient(90deg,rgba(60,66,76,0) 0,rgba(60,66,76,.09) 40%,rgba(60,66,76,.24) 75%,rgba(60,66,76,.46) 100%)"></div>
<div class="abs" style="left:1094px;top:512px;width:12px;height:194px;background:linear-gradient(270deg,rgba(60,66,76,0) 0,rgba(60,66,76,.09) 40%,rgba(60,66,76,.24) 75%,rgba(60,66,76,.46) 100%)"></div>
<div class="abs" style="left:278px;top:497px;width:816px;height:15px;background:linear-gradient(180deg,#83878c 0,#8c9095 20%,#9da1a6 55%,#a3a7ad 100%)"></div>
<div class="abs" style="left:278px;top:497px;width:22px;height:15px;background:linear-gradient(90deg,rgba(190,194,200,.55),rgba(190,194,200,0))"></div>
<div class="abs" style="left:1072px;top:497px;width:22px;height:15px;background:linear-gradient(270deg,rgba(190,194,200,.55),rgba(190,194,200,0))"></div>
<div class="abs" style="left:264px;top:497px;width:14px;height:15px;background:radial-gradient(ellipse 14px 15px at 100% 0,rgba(60,66,76,.42) 0,rgba(60,66,76,.16) 55%,rgba(60,66,76,0) 100%)"></div>
<div class="abs" style="left:1094px;top:497px;width:14px;height:15px;background:radial-gradient(ellipse 14px 15px at 0 0,rgba(60,66,76,.42) 0,rgba(60,66,76,.16) 55%,rgba(60,66,76,0) 100%)"></div>
<div class="abs" style="left:266px;top:504px;width:12px;height:8px;background:radial-gradient(ellipse 12px 8px at 100% 100%,rgba(60,66,76,.3) 0,rgba(60,66,76,0) 100%)"></div>
<div class="abs" style="left:1094px;top:504px;width:12px;height:8px;background:radial-gradient(ellipse 12px 8px at 0 100%,rgba(60,66,76,.3) 0,rgba(60,66,76,0) 100%)"></div>
<div class="abs page" style="left:278px;top:161px;width:816px;height:336px"></div>
<div class="abs page" style="left:278px;top:512px;width:816px;height:194px"></div>
<!-- doc text -->
<div class="t" style="left:374.40px;top:204px;font-size:16px;line-height:19px;color:#000;font-weight:bold;letter-spacing:0.182px;">INTERPRETING</div>
<div class="t" style="left:501.40px;top:204px;font-size:16px;line-height:19px;color:#000;font-weight:bold;letter-spacing:-0.563px;">THREE</div>
<div class="t" style="left:557.20px;top:204px;font-size:16px;line-height:19px;color:#000;font-weight:bold;letter-spacing:0.417px;">VENN</div>
<div class="t" style="left:607.60px;top:204px;font-size:16px;line-height:19px;color:#000;font-weight:bold;letter-spacing:-0.275px;">DIAGRAM</div>
<div class="t" style="left:686.70px;top:204px;font-size:16px;line-height:19px;color:#000;font-weight:bold;letter-spacing:0.300px;">SETS</div>
<div class="abs" style="left:374px;top:221px;width:359px;height:2px;background:#000"></div>
<div class="t" style="left:374.60px;top:223px;font-size:16px;line-height:19px;color:#000;font-weight:bold;letter-spacing:0.008px;">EXAMPLE</div>
<div class="t" style="left:373.80px;top:242px;font-size:16px;line-height:19px;color:#000;letter-spacing:-0.125px;">The</div>
<div class="t" style="left:405.00px;top:242px;font-size:16px;line-height:19px;color:#000;letter-spacing:1.400px;">Venn</div>
<div class="t" style="left:449.40px;top:242px;font-size:16px;line-height:19px;color:#000;letter-spacing:-0.183px;">diagram</div>
<div class="t" style="left:509.70px;top:242px;font-size:16px;line-height:19px;color:#000;letter-spacing:0.013px;">shows</div>
<div class="t" style="left:559.20px;top:242px;font-size:16px;line-height:19px;color:#000;letter-spacing:0.575px;">the</div>
<div class="t" style="left:586.80px;top:242px;font-size:16px;line-height:19px;color:#000;letter-spacing:0.590px;">number</div>
<div class="t" style="left:646.20px;top:242px;font-size:16px;line-height:19px;color:#000;letter-spacing:0.600px;">of</div>
<div class="t" style="left:663.00px;top:242px;font-size:16px;line-height:19px;color:#000;letter-spacing:0.260px;">pupils</div>
<div class="t" style="left:709.45px;top:242px;font-size:16px;line-height:19px;color:#000;letter-spacing:0.850px;">who</div>
<div class="t" style="left:744.00px;top:242px;font-size:16px;line-height:19px;color:#000;letter-spacing:-0.017px;">play</div>
<div class="t" style="left:777.30px;top:242px;font-size:16px;line-height:19px;color:#000;letter-spacing:0.175px;">different</div>
<div class="t" style="left:839.30px;top:242px;font-size:16px;line-height:19px;color:#000;letter-spacing:-0.190px;">games.</div>
<div class="t" style="left:374.90px;top:633px;font-size:16px;line-height:19px;color:#000;letter-spacing:0.350px;">Find</div>
<div class="t" style="left:409.90px;top:633px;font-size:16px;line-height:19px;color:#000;letter-spacing:0.325px;">the</div>
<div class="t" style="left:436.00px;top:633px;font-size:16px;line-height:19px;color:#000;letter-spacing:0.370px;">number</div>
<div class="t" style="left:494.90px;top:633px;font-size:16px;line-height:19px;color:#000;letter-spacing:1.000px;">of</div>
<div class="t" style="left:512.70px;top:633px;font-size:16px;line-height:19px;color:#000;letter-spacing:0.460px;">pupils</div>
<div class="t" style="left:559.55px;top:633px;font-size:16px;line-height:19px;color:#000;letter-spacing:1.050px;">who</div>
<div class="t" style="left:594.30px;top:633px;font-size:16px;line-height:19px;color:#000;letter-spacing:0.317px;">play</div>
<div class="t" style="left:374.30px;top:651px;font-size:16px;line-height:19px;color:#000;letter-spacing:-0.275px;">(a)</div>
<div class="t" style="left:397.70px;top:651px;font-size:16px;line-height:19px;color:#000;letter-spacing:0.450px;">all</div>
<div class="t" style="left:417.20px;top:651px;font-size:16px;line-height:19px;color:#000;letter-spacing:0.625px;">the</div>
<div class="t" style="left:444.10px;top:651px;font-size:16px;line-height:19px;color:#000;letter-spacing:0.163px;">three</div>
<div class="t" style="left:485.40px;top:651px;font-size:16px;line-height:19px;color:#000;letter-spacing:-0.170px;">games.</div>
<div class="t" style="left:471.15px;top:669px;font-size:16px;line-height:19px;color:#000;font-weight:bold;font-style:italic;">2</div>
<div class="t" style="left:483.55px;top:669px;font-size:16px;line-height:19px;color:#000;font-weight:bold;font-style:italic;letter-spacing:-0.010px;">pupils</div>
<div class="abs" style="left:470px;top:684px;width:60px;height:1px;background:#000"></div>
<div class="abs" style="left:470px;top:686px;width:60px;height:1px;background:#000"></div>
<svg style="left:397px;top:665px" width="20" height="5" viewBox="397 665 20 5"><path d="M397.500 667.500 l1.500 1 l1.500 -1 l1.500 1 l1.500 -1 l1.500 1 l1.500 -1 l1.500 1 l1.500 -1 l1.500 1 l1.500 -1 l1.500 1 l1.300 -.8" fill="none" stroke="#2a9a3a" stroke-width="1.1"/></svg>
<svg style="left:840px;top:161px" width="34" height="3" viewBox="840 161 34 3"><path d="M847.500 161 Q857 163.200 866.500 161 Z" fill="#000"/></svg>
<svg style="left:440px;top:290px" width="240" height="170" viewBox="440 290 240 170">
<circle cx="521.5" cy="356" r="46" fill="#fff" stroke="#111" stroke-width="1"/>
<circle cx="584" cy="356" r="46" fill="#fff" stroke="#111" stroke-width="1"/>
<circle cx="546.5" cy="393" r="46" fill="#fff" stroke="#111" stroke-width="1"/>
</svg>
<div class="abs" style="left:374px;top:614px;width:2px;height:18px;background:#000"></div>
<!-- scrollbar -->
<div class="abs" style="left:1349px;top:134px;width:17px;height:572px;background:linear-gradient(90deg,#dde1e8,#e3e6ec)"></div>
<div class="abs" style="left:1353px;top:139px;width:9px;height:2px;background:#7d8590"></div>
<div class="abs" style="left:1349px;top:143px;width:17px;height:17px;border:1px solid #8d96a3;background:#dfe2e8"></div>
<svg style="left:1349px;top:143px" width="17" height="17" viewBox="1349 143 17 17"><rect x="1351.500" y="145.500" width="7" height="6" fill="#f3eef2" stroke="#5c5f68" stroke-width=".8"/><rect x="1355.500" y="148.500" width="7" height="8" fill="#f3eef2" stroke="#5c5f68" stroke-width=".8"/><path d="M1353 147.500 l2 2 M1357 151 l1.500 2.500 l1.500 -2.500 M1358.500 155 l-1 -1.500" stroke="#44464e" stroke-width=".8" fill="none"/></svg>
<svg style="left:1349px;top:160px" width="17" height="546" viewBox="1349 160 17 546">
<path d="M1352.5 171 L1357.5 166 L1362.5 171 Z" fill="#444"/>
<rect x="1349.5" y="205.5" width="15" height="16" rx="1.5" fill="#f4f5f8" stroke="#8d96a3"/>
<path d="M1353 210.5h8M1353 212.5h8M1353 214.5h8M1353 216.5h8" stroke="#7a828e" stroke-width="1"/>
<path d="M1352.5 644 L1362.5 644 L1357.5 649 Z" fill="#444"/>
<path d="M1349 654.5h17" stroke="#c9cdd4"/>
<path d="M1354.5 662.5 L1357.5 659.5 L1360.5 662.5 Z M1354.5 665.5 L1357.5 662.5 L1360.5 665.5 Z" fill="#444" stroke="#444" stroke-width=".6"/>
<circle cx="1357.5" cy="679.5" r="3.3" fill="#d9dce2" stroke="#555" stroke-width="1"/>
<path d="M1354.5 693.5 L1357.5 696.5 L1360.5 693.5 Z M1354.5 696.5 L1357.5 699.5 L1360.5 696.5 Z" fill="#444" stroke="#444" stroke-width=".6"/>
</svg>
<!--DOC-END-->
<!--STATUS-->
<div id="status" class="abs"></div>
<div class="t" style="left:7.80px;top:710px;font-size:11.5px;line-height:14px;color:#3c3c46;letter-spacing:-0.200px;">Page: 6 of 74</div>
<div class="t" style="left:92.90px;top:710px;font-size:11.5px;line-height:14px;color:#3c3c46;letter-spacing:-0.183px;">Words: 12,121</div>
<div class="t" style="left:1194.00px;top:710px;font-size:11.5px;line-height:14px;color:#3c3c46;letter-spacing:-0.400px;">100%</div>
<div class="abs" style="left:83px;top:709px;width:1px;height:17px;background:#aeb3bc"></div><div class="abs" style="left:84px;top:709px;width:1px;height:17px;background:rgba(255,255,255,.85)"></div>
<div class="abs" style="left:175px;top:709px;width:1px;height:17px;background:#aeb3bc"></div><div class="abs" style="left:176px;top:709px;width:1px;height:17px;background:rgba(255,255,255,.85)"></div>
<div class="abs" style="left:210px;top:709px;width:1px;height:17px;background:#aeb3bc"></div><div class="abs" style="left:211px;top:709px;width:1px;height:17px;background:rgba(255,255,255,.85)"></div>
<svg style="left:0;top:706px" width="1366" height="22" viewBox="0 706 1366 22">
<path d="M184.5 718 l6.5 -4.5 l7.5 3.5 l-6.5 5 Z" fill="#f4f7fd" stroke="#3a5fb4" stroke-width="1"/>
<path d="M184.5 718 v2 l7.5 4 l6.5 -5 v-2" fill="#9db7e8" stroke="#3a5fb4" stroke-width=".9"/>
<path d="M193.5 709.8 l6 6.4 M199.5 709.8 l-6 6.4" stroke="#e02818" stroke-width="1.8"/>
<path d="M1088.500 709 V726" stroke="#aeb3bc"/><path d="M1089.500 709 V726" stroke="#fff" stroke-opacity=".85"/>
<rect x="1093.500" y="708.500" width="18" height="18" rx="2" fill="#fbd67a" stroke="#cfa040"/>
<rect x="1094.500" y="709.500" width="16" height="16" rx="1.500" fill="none" stroke="#fdeeb6"/>
<rect x="1097.500" y="712.500" width="10.500" height="10" fill="#fff" stroke="#4f5663" stroke-width="1"/>
<path d="M1099.500 715.500h6.500 M1099.500 717.500h6.500 M1099.500 719.500h6.500" stroke="#6d7380" stroke-width=".9"/>
<path d="M1116.500 713 q2.500 -1.200 5 .300 v8.500 q-2.500 -1.500 -5 -.300 Z M1126.500 713 q-2.500 -1.200 -5 .300 v8.500 q2.500 -1.500 5 -.300 Z" fill="#fff" stroke="#4f5663" stroke-width=".9"/>
<path d="M1117.800 715.500h2.400 M1117.800 717.500h2.400 M1117.800 719.500h2.400 M1122.800 715.500h2.400 M1122.800 717.500h2.400 M1122.800 719.500h2.400" stroke="#777d8a" stroke-width=".8"/>
<path d="M1120 722 l1.500 1.500 l1.500 -1.500" stroke="#4f5663" stroke-width=".8" fill="#fff"/>
<rect x="1133.900" y="712.500" width="9" height="9" fill="#fff" stroke="#4f5663" stroke-width=".9"/>
<path d="M1135.500 715h6 M1135.500 717h6 M1135.500 719h3" stroke="#777d8a" stroke-width=".8"/>
<circle cx="1142" cy="720.500" r="2.700" fill="#3f7fd8" stroke="#2756a8" stroke-width=".6"/><path d="M1140.300 720.200 q1.700 -1.600 3.400 0" stroke="#7fd27a" stroke-width=".9" fill="none"/>
<path d="M1153 713.500h1.500 M1156 713.500h6 M1155 716.500h1.500 M1158 716.500h4 M1155 719.500h1.500 M1158 719.500h4 M1153 722.500h1.500 M1156 722.500h6" stroke="#5d6370" stroke-width="1"/>
<path d="M1171 713.500h10.500 M1171 715.700h10.500 M1171 717.900h10.500 M1171 720.100h10.500 M1171 722.300h10.500" stroke="#5d6370" stroke-width="1"/>
<defs><radialGradient id="zb" cx=".5" cy=".35" r=".7"><stop offset="0" stop-color="#ffffff"/><stop offset="1" stop-color="#dfe2e8"/></radialGradient></defs>
<path d="M1245 716.5 H1347" stroke="#8e95a1" stroke-width="1"/><path d="M1245 717.5 H1347" stroke="#fff" stroke-width="1"/>
<circle cx="1238" cy="716.700" r="7.600" fill="url(#zb)" stroke="#7e8592" stroke-width="1"/>
<path d="M1233.800 716.700 h8.400" stroke="#444" stroke-width="1.800"/>
<circle cx="1354" cy="716.700" r="7.600" fill="url(#zb)" stroke="#7e8592" stroke-width="1"/>
<path d="M1349.800 716.700 h8.400 M1354 712.500 v8.400" stroke="#444" stroke-width="1.800"/>
<path d="M1292.500 710.500 h8 v7.500 l-4 4.500 l-4 -4.500 Z" fill="#f2f3f6" stroke="#6f7684" stroke-width="1"/>
</svg>
<!--STATUS-END-->
<!--TASKBAR-->
<div id="taskbar" class="abs"></div>
<div class="abs" style="left:0;top:730px;width:1366px;height:38px;background:linear-gradient(90deg,rgba(104,112,80,.95) 0,rgba(110,118,84,.92) 110px,rgba(128,138,100,.8) 200px,rgba(140,150,110,.7) 290px,rgba(125,135,100,.55) 420px,rgba(130,138,100,.4) 560px,rgba(140,145,105,.2) 680px,rgba(140,145,105,0) 760px,rgba(90,105,80,0) 1060px,rgba(88,102,80,.75) 1150px,rgba(80,98,76,.88) 1350px)"></div>
<div class="abs" style="left:0;top:728px;width:1366px;height:1px;background:#3f4a42"></div>
<div class="abs" style="left:0;top:729px;width:1366px;height:1px;background:rgba(220,220,195,.55)"></div>
<div class="abs" style="left:179px;top:729px;width:1.5px;height:40px;border:1px solid rgba(40,50,45,.7);border-radius:3px;background:linear-gradient(180deg,rgba(255,255,255,.38),rgba(255,255,255,.16) 50%,rgba(255,255,255,.06) 52%,rgba(255,255,255,.14));box-shadow:inset 0 0 0 1px rgba(255,255,255,.45)"></div>
<div class="abs" style="left:175px;top:729px;width:5px;height:40px;border:1px solid rgba(40,50,45,.7);border-left:none;border-radius:0 3px 3px 0;background:rgba(255,255,255,.2)"></div>
<div class="abs" style="left:121.5px;top:729px;width:54.0px;height:40px;border:1px solid rgba(40,50,45,.7);border-radius:3px;background:linear-gradient(180deg,rgba(255,255,255,.38),rgba(255,255,255,.16) 50%,rgba(255,255,255,.06) 52%,rgba(255,255,255,.14));box-shadow:inset 0 0 0 1px rgba(255,255,255,.45)"></div>
<div class="abs" style="left:307.5px;top:729px;width:58.5px;height:40px;border:1px solid rgba(40,50,45,.7);border-radius:3px;background:linear-gradient(180deg,rgba(255,255,255,.38),rgba(255,255,255,.16) 50%,rgba(255,255,255,.06) 52%,rgba(255,255,255,.14));box-shadow:inset 0 0 0 1px rgba(255,255,255,.45)"></div>
<div class="abs" style="left:431.5px;top:729px;width:59.0px;height:40px;border:1px solid rgba(40,50,45,.7);border-radius:3px;background:linear-gradient(180deg,rgba(255,255,255,.38),rgba(255,255,255,.16) 50%,rgba(255,255,255,.06) 52%,rgba(255,255,255,.14));box-shadow:inset 0 0 0 1px rgba(255,255,255,.45)"></div>
<div class="abs" style="left:493.5px;top:729px;width:58.5px;height:40px;border:1px solid rgba(40,50,45,.7);border-radius:3px;background:linear-gradient(180deg,rgba(255,255,255,.38),rgba(255,255,255,.16) 50%,rgba(255,255,255,.06) 52%,rgba(255,255,255,.14));box-shadow:inset 0 0 0 1px rgba(255,255,255,.45)"></div>
<div class="abs" style="left:555.5px;top:729px;width:59.0px;height:40px;border:1px solid rgba(40,50,45,.7);border-radius:3px;background:linear-gradient(180deg,rgba(240,246,255,.85),rgba(215,228,245,.75) 48%,rgba(170,195,225,.7) 52%,rgba(200,220,240,.8));box-shadow:inset 0 0 0 1px rgba(255,255,255,.45)"></div>
<div class="abs" style="left:617.5px;top:729px;width:59.0px;height:40px;border:1px solid rgba(40,50,45,.7);border-radius:3px;background:linear-gradient(180deg,rgba(255,255,255,.38),rgba(255,255,255,.16) 50%,rgba(255,255,255,.06) 52%,rgba(255,255,255,.14));box-shadow:inset 0 0 0 1px rgba(255,255,255,.45)"></div>
<div class="abs" style="left:1352px;top:729px;width:15px;height:40px;border:1px solid rgba(40,50,45,.75);background:linear-gradient(180deg,rgba(255,255,255,.45),rgba(255,255,255,.2) 50%,rgba(255,255,255,.12))"></div>
<div class="t" style="left:1293.60px;top:734px;font-size:11.5px;line-height:14px;color:#fff;letter-spacing:0.300px;">2:40 AM</div>
<div class="t" style="left:1286.10px;top:751px;font-size:11.5px;line-height:14px;color:#fff;letter-spacing:0.139px;">12/27/2014</div>
<svg style="left:0;top:728px" width="1366" height="40" viewBox="0 728 1366 40">
<defs><radialGradient id="orb" cx=".5" cy=".95" r="1"><stop offset="0" stop-color="#22e0ff"/><stop offset=".35" stop-color="#0f8fd0"/><stop offset=".7" stop-color="#0c5f9e"/><stop offset="1" stop-color="#6aa6cf"/></radialGradient><linearGradient id="orbhi" x1="0" y1="0" x2="0" y2="1"><stop offset="0" stop-color="#fff" stop-opacity=".75"/><stop offset="1" stop-color="#fff" stop-opacity=".1"/></linearGradient><radialGradient id="ieb" cx=".45" cy=".75" r=".8"><stop offset="0" stop-color="#2fd0ff"/><stop offset=".5" stop-color="#1585dc"/><stop offset="1" stop-color="#0b4aa0"/></radialGradient><linearGradient id="fold" x1="0" y1="0" x2="0" y2="1"><stop offset="0" stop-color="#fdf0b4"/><stop offset="1" stop-color="#f1cf69"/></linearGradient><linearGradient id="stand" x1="0" y1="0" x2="0" y2="1"><stop offset="0" stop-color="#c8ecfb"/><stop offset="1" stop-color="#3fa0e0"/></linearGradient><radialGradient id="wmpo" cx=".45" cy=".4" r=".7"><stop offset="0" stop-color="#ffb060"/><stop offset="1" stop-color="#ee6a10"/></radialGradient><radialGradient id="ffg" cx=".5" cy=".35" r=".7"><stop offset="0" stop-color="#39b8f0"/><stop offset="1" stop-color="#0d3f9a"/></radialGradient><linearGradient id="fox" x1="0" y1="0" x2="1" y2="1"><stop offset="0" stop-color="#ff9a1e"/><stop offset=".6" stop-color="#f0661a"/><stop offset="1" stop-color="#e03c14"/></linearGradient><linearGradient id="opr" x1="0" y1="0" x2="0" y2="1"><stop offset="0" stop-color="#f4505a"/><stop offset="1" stop-color="#d81c2c"/></linearGradient><linearGradient id="wd" x1="0" y1="0" x2="0" y2="1"><stop offset="0" stop-color="#dfe9f8"/><stop offset="1" stop-color="#ffffff"/></linearGradient></defs>
<circle cx="27" cy="748" r="18" fill="url(#orb)" stroke="#0b4f8a" stroke-width="1"/>
<circle cx="27" cy="748" r="18.6" fill="none" stroke="#cfe6f5" stroke-opacity=".7" stroke-width=".8"/>
<path d="M11 742 a17 17 0 0 1 32 0 q-16 6 -32 0 Z" fill="url(#orbhi)" opacity=".6"/>
<path d="M19.5 738.5 q4 -2 8 0 l-1.5 8.5 q-4 -1.8 -8 0 Z" fill="#e8561e"/>
<path d="M29 739.3 q4 1.8 8.6 -.8 l-1.6 8.6 q-4.4 2.4 -8.5 .6 Z" fill="#7fc241"/>
<path d="M17.6 748.6 q4 -1.8 8 0 l-1.5 8.4 q-4 -1.8 -8 0 Z" fill="#2f8fe0"/>
<path d="M27.2 749.4 q4 1.8 8.5 -.6 l-1.6 8.4 q-4.2 2.4 -8.4 .6 Z" fill="#fbbd1d"/>
<path d="M91.5 735.8 a12.2 12.2 0 1 0 11.6 16 h-6.4 a6.4 6.4 0 0 1 -11.6 -2 h18.6 a12.4 12.4 0 0 0 -12.2 -14 Z M85.2 745.5 a6.3 6.3 0 0 1 12.4 0 Z" fill="url(#ieb)" stroke="#0a3a80" stroke-width=".6"/>
<path d="M104.3 737.2 q-1.6 -4.6 -11 -.2 q-9.5 4.6 -14.8 13.6 q-4.6 8 -1.4 10.8 q3 2.4 10.6 -1.6" fill="none" stroke="#f2b616" stroke-width="1.8"/>
<path d="M77.4 751.5 q-4 7.5 -1 10" fill="none" stroke="#d9c868" stroke-width="2.6" opacity=".8"/>
<path d="M132.5 763 v-24.5 q0 -1.5 1.5 -1.5 h9 l2 2.5 h16.5 q1.5 0 1.5 1.5 v22 Z" fill="url(#fold)" stroke="#d6a740" stroke-width=".9"/>
<path d="M135.5 739.5 h8 v3 h-8 Z M143.5 741.2 h9 v3 h-9 Z M151.5 743 h9 v3 h-9 Z" fill="#fffdf2" stroke="#e2c372" stroke-width=".5"/>
<rect x="136" y="737.2" width="3" height="2" fill="#1fae3a"/><rect x="144" y="739.2" width="3" height="2" fill="#d7301f"/><rect x="152" y="741.2" width="3" height="2" fill="#2d8fe8"/>
<path d="M133 746 h29.5 v17 h-29.5 Z" fill="#f7dc85" stroke="#d9ad48" stroke-width=".7"/>
<path d="M136 763.5 v-9.5 q0 -3 3 -3 h18.5 q3 0 3 3 v9.5 h-5.5 v-6 q0 -1.5 -1.5 -1.5 h-10.5 q-1.500 0 -1.500 1.500 v6 Z" fill="url(#stand)" stroke="#2b7fc8" stroke-width=".9"/>
<path d="M139.5 748 v8 M135.500 752 h8" stroke="#fff" stroke-width=".9" opacity=".9"/>
<path d="M202.5 738 h21 l1.500 1 v21 l-1.500 1 h-21 Z" fill="#9fd0f0" stroke="#4f97cf" stroke-width=".8"/>
<rect x="199.500" y="737.500" width="21" height="23" fill="#8ec6ec" stroke="#4f97cf" stroke-width=".9"/>
<circle cx="209.800" cy="748.300" r="8.500" fill="url(#wmpo)" stroke="#d85a0a" stroke-width=".7"/>
<path d="M206.800 743.300 l8.200 5 l-8.200 5 Z" fill="#fff"/>
<circle cx="275.100" cy="748" r="14.300" fill="#4caf50"/>
<path d="M275.100 748 L262.700 740.850 A14.300 14.300 0 0 1 287.500 740.850 Z" fill="#e53935"/>
<path d="M262.700 740.850 A14.300 14.300 0 0 1 287.500 740.850 L275.100 740.850 Z" fill="#e53935"/>
<path d="M287.500 740.850 A14.300 14.300 0 0 1 275.100 762.300 L281.300 751.500 L275.100 740.850 Z" fill="#fdd21b"/>
<path d="M275.100 762.300 A14.300 14.300 0 0 1 262.700 740.850 L268.900 751.500 L281.300 751.500 Z" fill="#4caf50"/>
<circle cx="275.100" cy="748" r="7.100" fill="#f4f6f8"/>
<circle cx="275.100" cy="748" r="5.700" fill="#3f7fd8"/>
<circle cx="337" cy="747.600" r="14.300" fill="url(#ffg)"/>
<path d="M323.500 741 q-1.500 2.500 -1.500 7 a15 15 0 0 0 29.800 2 q.6 -5 -1.800 -9 q.4 4 -2 6.500 q1 -6 -3.500 -9.500 q2 4 -.5 6 q-2 -1.500 -5.500 -.8 q1.500 1.800 .8 3.800 q-3 .2 -4.500 2.500 q2.500 2.500 6.500 1.200 q-1 3.500 -5.500 3.500 q-5.500 -.5 -6.500 -6 q.5 -2 2.500 -2.300 q-1.800 -1.500 -1.500 -3.700 q-2.500 .300 -3.500 2.300 q-.5 -3 1.200 -5.500 q-2.500 .5 -4.500 2 Z" fill="url(#fox)"/>
<path d="M347.500 740 q4 4.500 3.800 10 q-1 7.500 -7.500 11 q5 -5.500 4.200 -11.500 q-.2 -5 -2.500 -8 Z" fill="#fbd12a" opacity=".9"/>
<path d="M399 732.600 a13.900 15 0 1 0 .001 0 Z M399 736.500 a4.900 11.100 0 1 1 -.001 0 Z" fill="url(#opr)" fill-rule="evenodd" stroke="#b81420" stroke-width=".6"/>
<rect x="-7" y="-7" width="14" height="14" transform="translate(453.700 744.800) rotate(14)" fill="#b5e6a0" stroke="#86cf70" stroke-width=".8"/>
<rect x="-5.500" y="-8" width="11" height="16" transform="translate(457.800 749.300)" fill="#a9d2f7" stroke="#7fb6ea" stroke-width=".8"/>
<rect x="-8" y="-8" width="16" height="16" transform="translate(466.300 749.500) rotate(-18)" fill="#fbe37a" stroke="#ecc94a" stroke-width=".8"/>
<g id="skg" transform="translate(522.300 747) scale(1.120) translate(-522.800 -746.800)">
<path d="M512 736 a7.500 7.500 0 0 1 10 -1.800 a12.500 12.500 0 0 1 13.500 14.500 a7.500 7.500 0 0 1 -10 9.500 a12.500 12.500 0 0 1 -15 -13.500 a7.500 7.500 0 0 1 1.500 -8.700 Z" fill="#12a5e6"/>
<path d="M527.500 742.500 q-1.500 -3 -5.500 -3 q-5 .2 -5 3.800 q0 3 5 4 q5 1 5 4 q0 3.500 -5 3.700 q-4.500 0 -6 -3.500" fill="none" stroke="#fff" stroke-width="2.600" stroke-linecap="round"/>
<path d="M525.500 753 a5.500 5.500 0 0 1 6.500 -2.500 a5.200 5.200 0 0 1 4.200 6.500 a5 5 0 0 1 -5 5 a5.500 5.500 0 0 1 -6.200 -5 q-.5 -2 .5 -4 Z" fill="#fff" stroke="#7ab800" stroke-width="1.300"/>
</g>
<rect x="569.500" y="732.500" width="28.500" height="28.500" rx="1" fill="url(#wd)" stroke="#2f5fb0" stroke-width="1.200"/>
<path d="M571 733.500 q6 -1 14 -.500 h12 v11 q-13 -4 -26 2 Z" fill="#bcd0ef"/>
<path d="M571 753 l20 -8 l6 1 v14 h-26 Z" fill="#fff"/>
<path d="M573 758.500 l19 -5 M573 756 l18 -6 M574 753.500 l14 -5.500" stroke="#b9c6dc" stroke-width=".9"/>
<text x="584.500" y="753" font-family="Liberation Sans" font-weight="bold" font-size="22" fill="#134fb4" text-anchor="middle" stroke="#134fb4" stroke-width=".9" textLength="22" lengthAdjust="spacingAndGlyphs">W</text>
<path d="M589.500 750.500 l9.500 -3.200 l1.200 10.500 l-8.500 2.200 Z" fill="#fff" stroke="#c3cfe2" stroke-width=".7"/>
<path d="M591.500 753.500 l6 -2 M592 756 l6 -2" stroke="#c9d3e4" stroke-width=".8"/>
<g id="ptg" transform="translate(646.500 749) scale(1.130) translate(-646 -749)">
<path d="M633 752 q0 -9 10 -11.500 q10 -1.500 13.500 5 q2.500 6 -2 11 q-3.500 3.500 -8 3 q-2 -1 -1 -3 q.5 -2.500 -2 -2.500 q-3.500 1 -6.500 .500 q-4 -.500 -4 -2.500 Z" fill="#bcdcf2" stroke="#6fa3cf" stroke-width=".9"/>
<circle cx="637.700" cy="749.700" r="2.200" fill="#e23c2c"/><circle cx="642.200" cy="744.500" r="2.200" fill="#4fb83e"/><circle cx="648.700" cy="742.300" r="2.200" fill="#f5a81c"/><circle cx="645.300" cy="751.500" r="2" fill="#eaf4fb" stroke="#8fb6d6" stroke-width=".6"/>
<path d="M647.500 763.500 l7 -20.500 l1.800 .6 l-6.300 20.500 Z" fill="#f08a24" stroke="#c86410" stroke-width=".5"/>
<path d="M654.500 743 l1.200 -3.500 l1.800 .6 l-1 3.500 Z" fill="#9aa0a8"/>
<path d="M655.700 739.500 q0 -4 2.500 -6 q2.500 2.500 1.500 6.800 Z" fill="#e8c48a" stroke="#b8905a" stroke-width=".5"/>
</g>
<path d="M1163.800 752.300 l4.800 -4.800 l4.800 4.800 Z" fill="#fff"/>
<rect x="1186" y="752" width="2" height="2" fill="#fff"/>
<rect x="1189" y="750.5" width="2" height="3.5" fill="#fff"/>
<rect x="1192" y="748.5" width="2" height="5.5" fill="#fff"/>
<rect x="1195" y="746" width="2" height="8" fill="#fff"/>
<rect x="1198" y="743.5" width="2" height="10.5" fill="#fff"/>
<path d="M1210.500 742 v13" stroke="#fff" stroke-width="1.500"/><path d="M1211.500 742.500 q3 -1.200 5.500 0 q2.500 1.200 5 0 v6.500 q-2.500 1.200 -5 0 q-2.500 -1.200 -5.500 0 Z" fill="#fff"/>
<circle cx="1220.300" cy="752.300" r="4.300" fill="#e0281c" stroke="#fff" stroke-width=".8"/><path d="M1218.500 750.500 l3.600 3.600 M1222.100 750.500 l-3.600 3.600" stroke="#fff" stroke-width="1.300"/>
<rect x="1233" y="742.500" width="8.500" height="11.500" rx="1" fill="none" stroke="#fff" stroke-width="1.400"/><rect x="1235" y="740.500" width="4.500" height="2" fill="#fff"/>
<path d="M1240 744 h5 v1.500 h1.500 v-1.500 h1.300 v5 q0 2 -2.500 2.300 v3 h-2.600 v-3 q-2.600 -.3 -2.700 -2.300 Z" fill="#fff" stroke="#555" stroke-width=".4"/>
<path d="M1259.500 746 h3 l4.500 -4 v12.500 l-4.500 -4 h-3 Z" fill="#fff"/><path d="M1269.300 744.500 q2.200 3.500 0 7.500" fill="none" stroke="#fff" stroke-width="1.100"/>
</svg>
<!--TASKBAR-END-->
</div>
</body>
</html>
